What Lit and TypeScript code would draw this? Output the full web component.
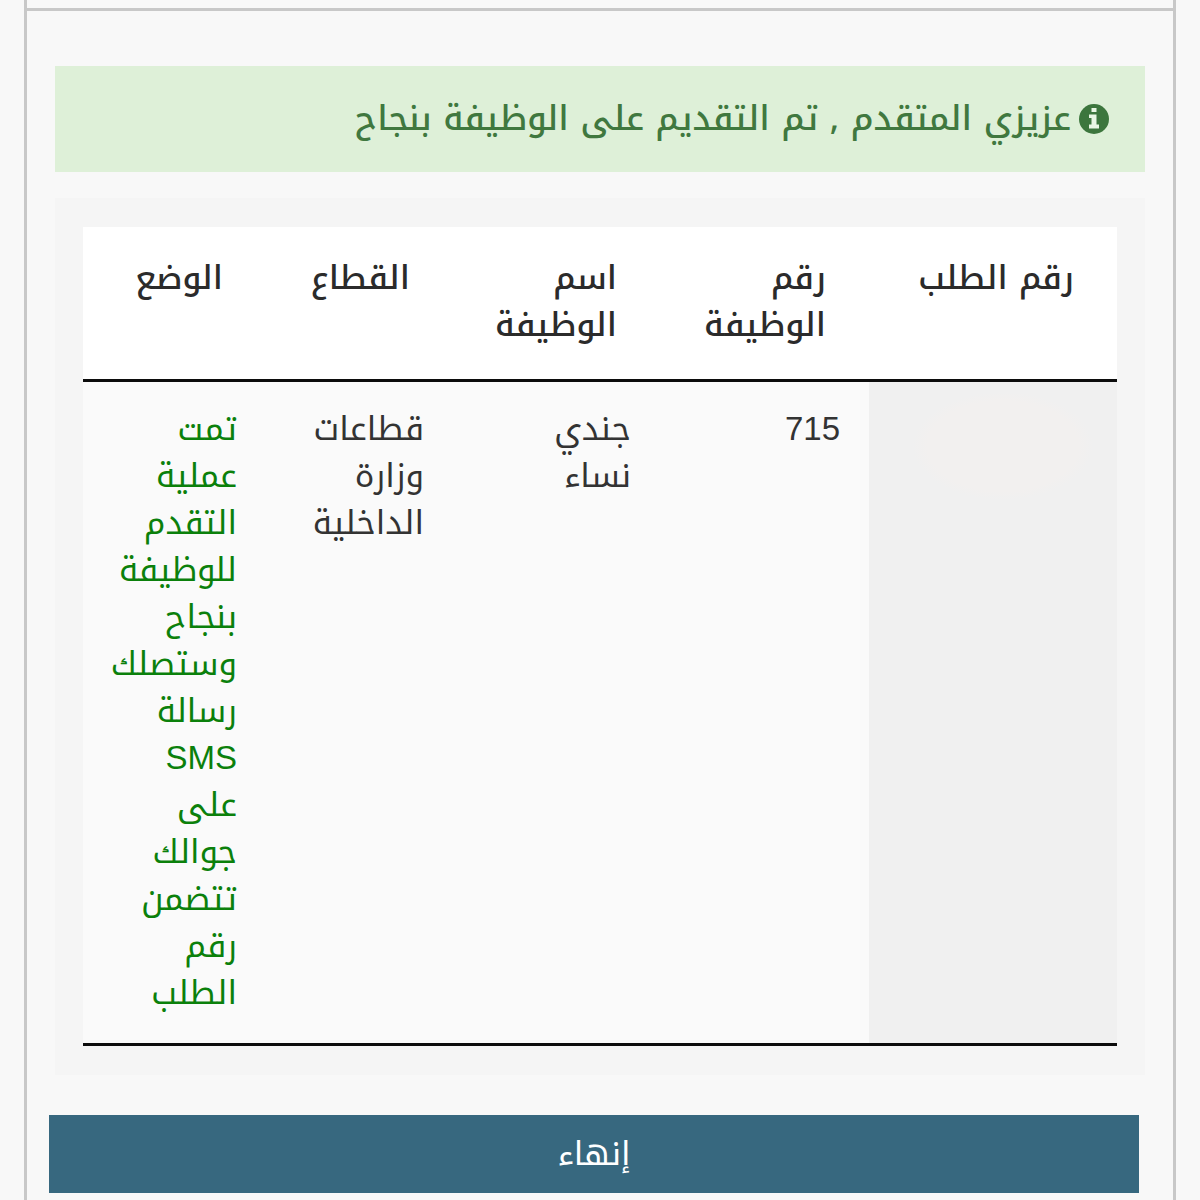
import { LitElement, html, css } from "lit";
import { customElement, property } from "lit/decorators.js";

interface Application {
  requestNumber: string;
  jobNumber: string;
  jobName: string;
  sector: string;
  status: string;
}

@customElement("success-notice")
export class SuccessNotice extends LitElement {
  static styles = css`
    :host {
      display: block;
    }
    .notice {
      display: flex;
      align-items: center;
      gap: 8px;
      margin: 0;
      padding: 29px 36px 30px;
      background: #def0d8;
      color: #40783f;
      font-family: "Noto Kufi Arabic", "Liberation Sans", sans-serif;
      font-size: 34px;
      font-weight: 500;
    }
    .icon {
      flex: none;
      width: 30px;
      height: 30px;
      fill: #3c763d;
    }
    .glyph {
      fill: #e8f6e4;
    }
  `;

  render() {
    return html`<p class="notice" role="status">
      <svg class="icon" viewBox="0 0 30 30" aria-hidden="true">
        <circle cx="15" cy="15" r="15" />
        <path class="glyph" d="M12.500 4h5v4h-5zM10 10.500h7.500v10h2.500v4h-10v-4h2.500v-6.500h-2.500z" />
      </svg>
      <span><slot></slot></span>
    </p>`;
  }
}

@customElement("application-table")
export class ApplicationTable extends LitElement {
  static styles = css`
    :host {
      display: block;
      padding: 29px 28px;
      background: #f5f5f5;
    }
    table {
      width: 100%;
      table-layout: fixed;
      border-collapse: separate;
      border-spacing: 0;
      background: #fafafa;
    }
    .request {
      width: 248px;
    }
    .number {
      width: 209px;
    }
    .name {
      width: 207px;
    }
    .sector {
      width: 187px;
    }
    .status {
      width: 183px;
    }
    th,
    td {
      text-align: start;
      vertical-align: top;
      border-bottom: 3px solid #0c0c0c;
    }
    th {
      padding: 28px 43px 30px 24px;
      background: #fff;
      color: #2b2b2b;
      font-family: "Noto Kufi Arabic", "Liberation Sans", sans-serif;
      font-weight: 500;
    }
    td {
      padding: 23px 29px 27px 28px;
    }
    .masked {
      background: radial-gradient(90px 54px at 54% 64px, #f2f0ef 84%, #f0f0f0);
    }
    .done {
      color: #0b800b;
    }
  `;

  @property({ attribute: false }) rows: Application[] = [];

  render() {
    return html`<table>
      <colgroup>
        <col class="request" />
        <col class="number" />
        <col class="name" />
        <col class="sector" />
        <col class="status" />
      </colgroup>
      <thead>
        <tr>
          <th scope="col">رقم الطلب</th>
          <th scope="col">رقم الوظيفة</th>
          <th scope="col">اسم الوظيفة</th>
          <th scope="col">القطاع</th>
          <th scope="col">الوضع</th>
        </tr>
      </thead>
      <tbody>
        ${this.rows.map(
          (row) => html`<tr>
            <td class="masked">${row.requestNumber}</td>
            <td>${row.jobNumber}</td>
            <td>${row.jobName}</td>
            <td>${row.sector}</td>
            <td class="done">${row.status}</td>
          </tr>`
        )}
      </tbody>
    </table>`;
  }
}

@customElement("app-root")
export class AppRoot extends LitElement {
  static styles = css`
    :host {
      display: block;
      box-sizing: border-box;
      min-height: 100vh;
      padding: 0 24px;
      background: #f8f8f8;
      color: #333;
      direction: rtl;
      font-family: "Liberation Sans", "Noto Kufi Arabic", sans-serif;
      font-size: 33px;
      line-height: 47px;
    }
    .frame {
      box-sizing: border-box;
      min-height: 100vh;
      padding-top: 8px;
      border: solid #c8c8c8;
      border-width: 0 3px;
    }
    .content {
      display: flex;
      flex-direction: column;
      gap: 26px;
      padding: 55px 28px 7px;
      border-top: 3px solid #c8c8c8;
    }
    .finish {
      margin: 14px 6px 0 -6px;
      padding: 15px 24px 16px;
      border: 0;
      background: #37687f;
      color: #fff;
      font: inherit;
      cursor: pointer;
    }
  `;

  private rows: Application[] = [
    {
      requestNumber: "",
      jobNumber: "715",
      jobName: "جندي نساء",
      sector: "قطاعات وزارة الداخلية",
      status: "تمت عملية التقدم للوظيفة بنجاح وستصلك رسالة SMS على جوالك تتضمن رقم الطلب",
    },
  ];

  render() {
    return html`<main class="frame">
      <div class="content">
        <success-notice>عزيزي المتقدم , تم التقديم على الوظيفة بنجاح</success-notice>
        <application-table .rows=${this.rows}></application-table>
        <button class="finish" type="button">إنهاء</button>
      </div>
    </main>`;
  }
}
